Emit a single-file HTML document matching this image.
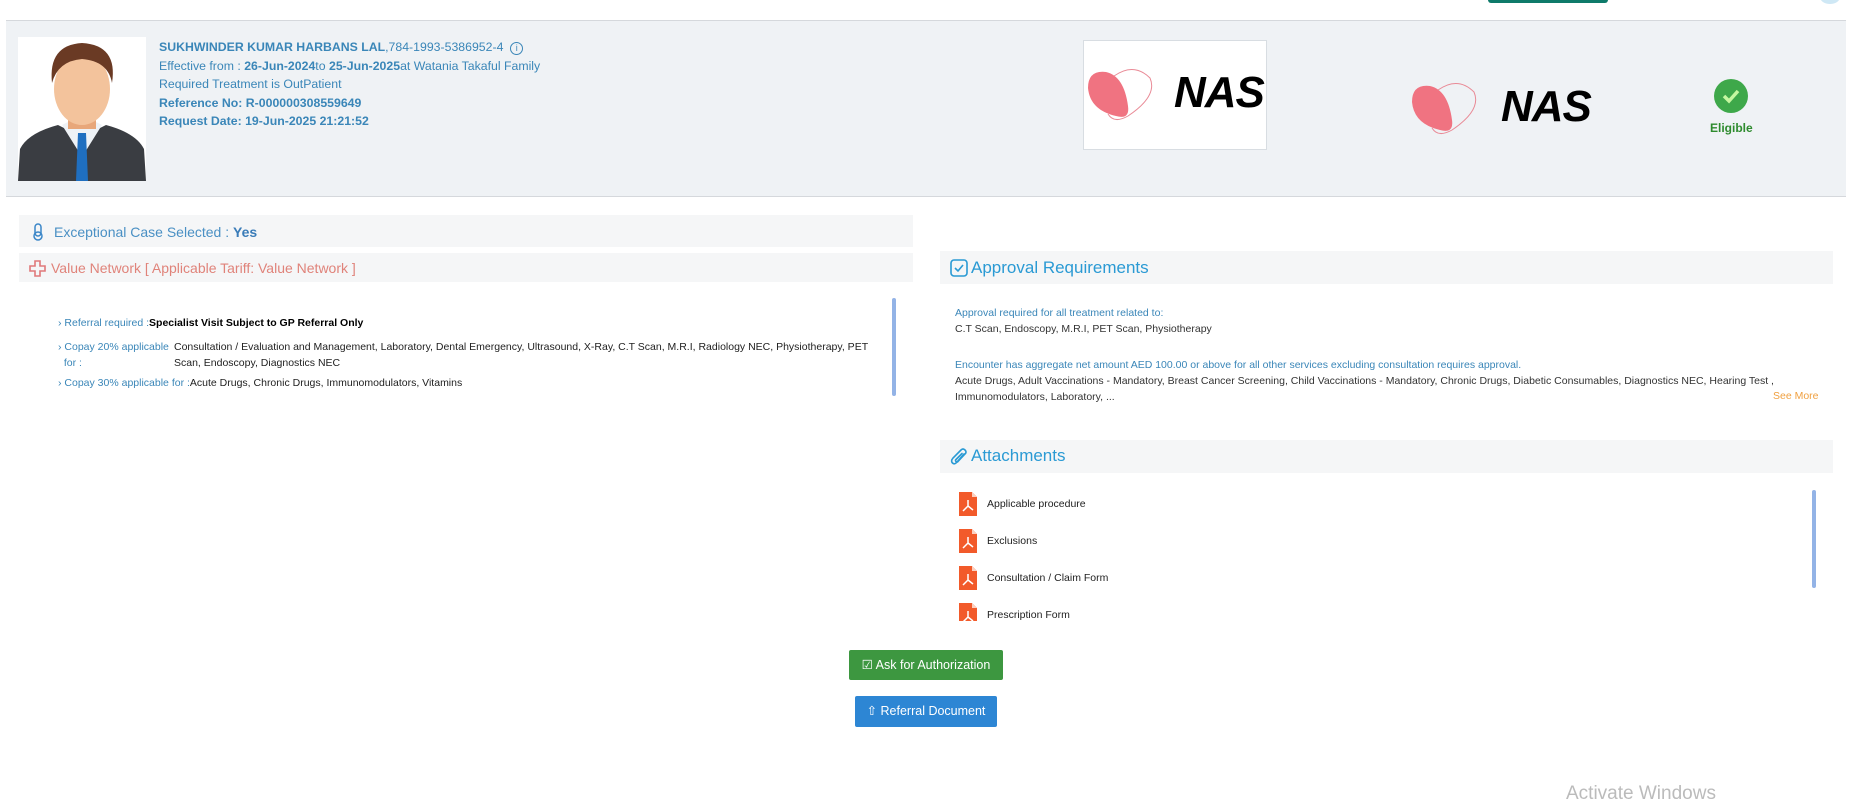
<!DOCTYPE html>
<html><head><meta charset="utf-8"><style>
*{margin:0;padding:0;box-sizing:border-box}
body{width:1872px;height:803px;overflow:hidden;background:#fff;font-family:"Liberation Sans",sans-serif;position:relative}
.a{position:absolute;white-space:nowrap}
.bl{color:#3a86b8}
.sm{font-size:10.5px}
.pdf{position:absolute;left:9px;width:18px;height:24px}
</style></head><body>
<div class="a" style="left:1488px;top:0;width:120px;height:3px;background:#0e7a6a;border-radius:0 0 3px 3px"></div>
<div class="a" style="left:1820px;top:-10px;width:20px;height:14px;border-radius:50%;background:#cfe8f5"></div>

<div class="a" style="left:6px;top:20px;width:1840px;height:177px;background:#eff2f5;border-top:1px solid #d5d8dc;border-bottom:1px solid #d5d8dc"></div>
<div class="a" style="left:18px;top:37px;width:128px;height:144px;background:#fff;overflow:hidden">
<svg width="128" height="144" viewBox="0 0 128 144">
<path d="M0 144 L2 112 Q10 96 40 88 L64 100 L88 88 Q118 96 126 112 L128 144Z" fill="#3a3d42"/>
<path d="M44 88 L64 120 L84 88 L76 84 L52 84Z" fill="#eef2f6"/>
<path d="M60 96 L68 96 L70 144 L58 144Z" fill="#1f6fc0"/>
<rect x="50" y="70" width="28" height="22" fill="#e8a77a"/>
<ellipse cx="64" cy="52" rx="28" ry="36" fill="#f3c39c"/>
<path d="M34 46 Q30 8 64 6 Q100 8 94 46 Q90 24 64 22 Q40 24 34 46Z" fill="#6a3a24"/>
</svg></div>
<div class="a bl" style="left:159px;top:38px;font-size:12.3px;line-height:18.5px">
<div><b>SUKHWINDER KUMAR HARBANS LAL</b>,784-1993-5386952-4 &nbsp;<span style="display:inline-block;width:13px;height:13px;border:1px solid #3a86b8;border-radius:50%;font-size:9px;text-align:center;line-height:11px">i</span></div>
<div>Effective from : <b>26-Jun-2024</b>to <b>25-Jun-2025</b>at Watania Takaful Family</div>
<div>Required Treatment is OutPatient</div>
<div><b>Reference No: R-000000308559649</b></div>
<div><b>Request Date: 19-Jun-2025 21:21:52</b></div>
</div>
<div class="a" style="left:1083px;top:40px;width:184px;height:110px;background:#fff;border:1px solid #d8dde2"></div>
<svg class="a" style="left:1084px;top:66px" width="80" height="60" viewBox="0 0 80 60"><path d="M4 22 Q4 4 22 6 Q40 10 44 40 Q46 54 32 50 Q6 44 4 22Z" fill="#f07381"/><path d="M30 10 Q50 -4 66 12 Q74 30 44 50 Q30 58 24 48" fill="none" stroke="#e98a96" stroke-width="1"/></svg>
<div class="a" style="left:1174px;top:68px;font-size:44px;font-weight:bold;font-style:italic;letter-spacing:-1px;color:#000">NAS</div>
<svg class="a" style="left:1408px;top:80px" width="80" height="60" viewBox="0 0 80 60"><path d="M4 22 Q4 4 22 6 Q40 10 44 40 Q46 54 32 50 Q6 44 4 22Z" fill="#f07381"/><path d="M30 10 Q50 -4 66 12 Q74 30 44 50 Q30 58 24 48" fill="none" stroke="#e98a96" stroke-width="1"/></svg>
<div class="a" style="left:1501px;top:82px;font-size:44px;font-weight:bold;font-style:italic;letter-spacing:-1px;color:#000">NAS</div>
<svg class="a" style="left:1714px;top:79px" width="34" height="34"><circle cx="17" cy="17" r="17" fill="#3ea84a"/><path d="M10 17 L15 22 L24 12" fill="none" stroke="#c5f7a0" stroke-width="3.5"/></svg>
<div class="a" style="left:1710px;top:121px;font-size:12px;font-weight:bold;color:#2e8b2e">Eligible</div>

<div class="a" style="left:19px;top:215px;width:894px;height:32px;background:#f5f6f7"></div>
<svg class="a" style="left:32px;top:223px" width="12" height="18"><rect x="3" y="1" width="6" height="12" rx="3" fill="none" stroke="#3a86c8" stroke-width="1.5"/><circle cx="6" cy="13" r="4" fill="none" stroke="#3a86c8" stroke-width="1.5"/></svg>
<div class="a" style="left:54px;top:224px;font-size:14px;color:#4a90c4">Exceptional Case Selected : <b style="color:#3a7cb8">Yes</b></div>
<div class="a" style="left:19px;top:253px;width:894px;height:29px;background:#f5f6f7"></div>
<svg class="a" style="left:29px;top:260px" width="17" height="17"><path d="M6 1h5v5h5v5h-5v5h-5v-5h-5v-5h5z" fill="none" stroke="#e0787a" stroke-width="1.6"/></svg>
<div class="a" style="left:51px;top:260px;font-size:14px;color:#e0837a">Value Network [ Applicable Tariff: Value Network ]</div>

<div class="a sm" style="left:58px;top:316px;line-height:15px"><span class="bl">›&nbsp;Referral required :</span><b style="color:#000">Specialist Visit Subject to GP Referral Only</b></div>
<div class="a sm bl" style="left:58px;top:339px;line-height:16px">›&nbsp;Copay 20% applicable<br>&nbsp;&nbsp;for :</div>
<div class="a sm" style="left:174px;top:339px;line-height:16px;color:#222">Consultation / Evaluation and Management, Laboratory, Dental Emergency, Ultrasound, X-Ray, C.T Scan, M.R.I, Radiology NEC, Physiotherapy, PET<br>Scan, Endoscopy, Diagnostics NEC</div>
<div class="a sm" style="left:58px;top:377px"><span class="bl">›&nbsp;Copay 30% applicable for :</span><span style="color:#222">Acute Drugs, Chronic Drugs, Immunomodulators, Vitamins</span></div>
<div class="a" style="left:892px;top:298px;width:4px;height:98px;background:#93b3e6;border-radius:2px"></div>

<div class="a" style="left:940px;top:251px;width:893px;height:33px;background:#f5f6f7"></div>
<svg class="a" style="left:950px;top:259px" width="18" height="18"><rect x="1" y="1" width="16" height="16" rx="3" fill="none" stroke="#2a9ad4" stroke-width="1.6"/><path d="M5 9l3 3 5-6" fill="none" stroke="#2a9ad4" stroke-width="1.6"/></svg>
<div class="a" style="left:971px;top:258px;font-size:17px;color:#2a9ad4">Approval Requirements</div>
<div class="a sm" style="left:955px;top:306px;line-height:15.5px"><span class="bl">Approval required for all treatment related to:</span><br><span style="color:#333">C.T Scan, Endoscopy, M.R.I, PET Scan, Physiotherapy</span></div>
<div class="a sm" style="left:955px;top:357px;line-height:16px"><span class="bl">Encounter has aggregate net amount AED 100.00 or above for all other services excluding consultation requires approval.</span><br><span style="color:#333">Acute Drugs, Adult Vaccinations - Mandatory, Breast Cancer Screening, Child Vaccinations - Mandatory, Chronic Drugs, Diabetic Consumables, Diagnostics NEC, Hearing Test ,<br>Immunomodulators, Laboratory, ...</span></div>
<div class="a sm" style="left:1773px;top:390px;color:#f0a040">See More</div>

<div class="a" style="left:940px;top:440px;width:893px;height:33px;background:#f5f6f7"></div>
<svg class="a" style="left:950px;top:447px" width="18" height="20" viewBox="0 0 18 20"><path d="M14 7 L7 15 Q4.5 18 2.5 16 Q0.5 14 3 11 L11 3 Q13 1 15 3 Q17 5 15 7 L8 14.5 Q7 15.5 6 14.5 Q5 13.5 6 12.5 L12 6.5" fill="none" stroke="#2a9ad4" stroke-width="1.6" stroke-linecap="round"/></svg>
<div class="a" style="left:971px;top:446px;font-size:17px;color:#2a9ad4">Attachments</div>
<div class="a" style="left:950px;top:490px;width:860px;height:131px;overflow:hidden">
<svg class="pdf" style="top:2px" viewBox="0 0 18 24"><path d="M0 0H13L18 5V24H0Z" fill="#f25a2a"/><path d="M13 0V5H18" fill="#fbd0c0"/><path d="M9 8V14M9 14L4 19M9 14L14 18" stroke="#fff" stroke-width="1.5" fill="none"/></svg><div style="position:absolute;left:37px;top:8px;font-size:10.5px;color:#222">Applicable procedure</div>
<svg class="pdf" style="top:39px" viewBox="0 0 18 24"><path d="M0 0H13L18 5V24H0Z" fill="#f25a2a"/><path d="M13 0V5H18" fill="#fbd0c0"/><path d="M9 8V14M9 14L4 19M9 14L14 18" stroke="#fff" stroke-width="1.5" fill="none"/></svg><div style="position:absolute;left:37px;top:45px;font-size:10.5px;color:#222">Exclusions</div>
<svg class="pdf" style="top:76px" viewBox="0 0 18 24"><path d="M0 0H13L18 5V24H0Z" fill="#f25a2a"/><path d="M13 0V5H18" fill="#fbd0c0"/><path d="M9 8V14M9 14L4 19M9 14L14 18" stroke="#fff" stroke-width="1.5" fill="none"/></svg><div style="position:absolute;left:37px;top:82px;font-size:10.5px;color:#222">Consultation / Claim Form</div>
<svg class="pdf" style="top:113px" viewBox="0 0 18 24"><path d="M0 0H13L18 5V24H0Z" fill="#f25a2a"/><path d="M13 0V5H18" fill="#fbd0c0"/><path d="M9 8V14M9 14L4 19M9 14L14 18" stroke="#fff" stroke-width="1.5" fill="none"/></svg><div style="position:absolute;left:37px;top:119px;font-size:10.5px;color:#222">Prescription Form</div>
</div>
<div class="a" style="left:1812px;top:490px;width:4px;height:98px;background:#93b3e6;border-radius:2px"></div>

<div class="a" style="left:849px;top:650px;width:154px;height:30px;background:#3d9740;border-radius:2px;color:#fff;font-size:12.5px;line-height:30px;text-align:center">☑ Ask for Authorization</div>
<div class="a" style="left:855px;top:696px;width:142px;height:31px;background:#2d86d4;border-radius:2px;color:#fff;font-size:12.5px;line-height:31px;text-align:center">⇧ Referral Document</div>

<div class="a" style="left:1566px;top:783px;font-size:19px;color:#bbb">Activate Windows</div>
</body></html>
